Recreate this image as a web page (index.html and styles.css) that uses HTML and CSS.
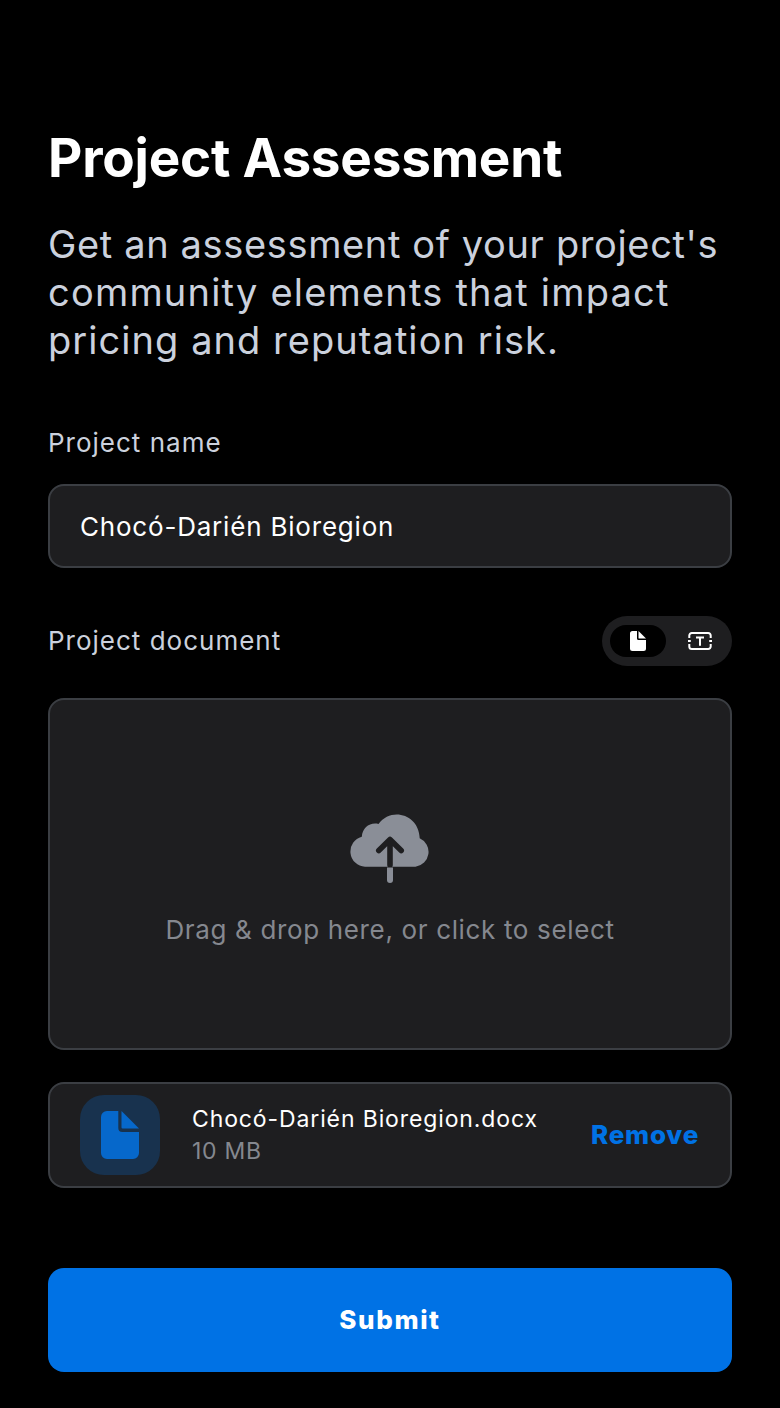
FILE: index.html
```html
<!DOCTYPE html>
<html lang="en">
<head>
<meta charset="utf-8">
<title>Project Assessment</title>
<link rel="stylesheet" href="styles.css">
</head>
<body>
<main class="page">
  <h1 class="title">Project Assessment</h1>
  <p class="intro"><span class="tight">Get an assessment of your project's</span><br><span class="loose">community elements that impact</span><br>pricing and reputation risk.</p>
  <label class="label" for="name">Project name</label>
  <input class="input" id="name" type="text" value="Chocó-Darién Bioregion">
  <div class="row">
    <span class="label doc">Project document</span>
    <div class="toggle">
      <button class="seg active" aria-label="File"><svg width="16" height="20" viewBox="0 0 16 20" fill="#fff"><path d="M2.500 0H7v7.500A1.500 1.500 0 0 0 8.500 9H16v8.500a2.500 2.500 0 0 1-2.500 2.500h-11A2.500 2.500 0 0 1 0 17.500v-15A2.500 2.500 0 0 1 2.500 0z"/><path d="M8.500 0L16 7.500H9a.5.5 0 0 1-.5-.5z"/></svg></button>
      <button class="seg" aria-label="Text"><svg width="24" height="18" viewBox="0 0 24 18" fill="none" stroke="#fff" stroke-width="2"><path d="M1.300 6V3.500A2.500 2.500 0 0 1 3.800 1h16.400a2.500 2.500 0 0 1 2.500 2.500V6M1.300 12v2.500A2.500 2.500 0 0 0 3.800 17h16.400a2.500 2.500 0 0 0 2.500-2.500V12M8 5.500h8M12 5.500V13.700"/><path d="M0 9h2.800M21.200 9H24"/></svg></button>
    </div>
  </div>
  <div class="drop">
    <svg width="80" height="70" viewBox="0 0 80 70"><path fill="#8a8e97" d="M15 52.700A15.200 15.200 0 0 1 11.800 22.800C12.500 13.500 20 8 28.500 10C41-7.500 69 0 69.700 24.300A14.900 14.900 0 0 1 65.500 52.700z"/><path d="M40 51V26M28.800 36.500L40 25.500l11.200 11" fill="none" stroke="#1e1e20" stroke-width="5.600" stroke-linecap="round" stroke-linejoin="round"/><path d="M37 53.500h6v12.500a3 3 0 0 1-6 0z" fill="#8a8e97"/></svg>
    <p class="hint">Drag &amp; drop here, or click to select</p>
  </div>
  <div class="file">
    <div class="thumb"><svg width="38" height="48" viewBox="0 0 38 48" fill="#0668cb"><path d="M6 0h11.300v17a4 4 0 0 0 4 4H38v21a6 6 0 0 1-6 6H6a6 6 0 0 1-6-6V6a6 6 0 0 1 6-6z"/><path d="M20.500 0L38 17.500H21.500a1 1 0 0 1-1-1z"/></svg></div>
    <div class="meta"><div class="fname">Chocó-Darién Bioregion.docx</div><div class="size">10 MB</div></div>
    <button class="remove">Remove</button>
  </div>
  <button class="submit">Submit</button>
</main>
</body>
</html>
```
FILE: styles.css
```css
* { box-sizing: border-box; margin: 0; padding: 0; }
body { background: #000; font-family: Inter, "Liberation Sans", sans-serif; color: #fff; }
button { border: 0; background: none; font: inherit; color: inherit; }
svg { display: block; }
.page { height: 1408px; padding: 126px 48px 0; display: flex; flex-direction: column; }
.title { font-size: 53px; line-height: 64px; font-weight: 700; letter-spacing: -.2px; white-space: nowrap; }
.intro { margin-top: 30px; font-size: 38px; line-height: 48px; letter-spacing: 1.05px; color: #cbd1dd; white-space: nowrap; }
.tight { letter-spacing: .64px; }
.loose { letter-spacing: 1.2px; }
.label { margin-top: 61px; font-size: 26px; line-height: 36px; letter-spacing: 1px; color: #cbd1dd; }
.input { margin-top: 23px; height: 84px; padding: 0 30px; border: 2px solid #3b3e43; border-radius: 16px; background: #1e1e20; color: #fff; font: 26px Inter, sans-serif; letter-spacing: .8px; outline: 0; }
.row { margin-top: 48px; height: 50px; display: flex; justify-content: space-between; align-items: center; }
.doc { margin: 0; }
.toggle { display: flex; gap: 6px; padding: 8px 4px 8px 8px; width: 130px; height: 50px; border-radius: 25px; background: #1e1e20; align-items: center; }
.seg { width: 56px; height: 32px; border-radius: 16px; display: flex; align-items: center; justify-content: center; }
.active { background: #000; }
.drop { margin-top: 32px; height: 352px; border: 2px solid #3b3e43; border-radius: 16px; background: #1e1e20; display: flex; flex-direction: column; align-items: center; padding-top: 114px; }
.hint { margin-top: 28px; font-size: 26px; line-height: 36px; letter-spacing: .65px; color: #85888f; white-space: nowrap; }
.file { margin-top: 32px; height: 106px; border: 2px solid #3b3e43; border-radius: 16px; background: #1e1e20; display: flex; align-items: center; padding: 0 31px 0 30px; }
.thumb { width: 80px; height: 80px; border-radius: 24px; background: #18324e; display: flex; align-items: center; justify-content: center; }
.meta { margin-left: 32px; flex: 1; font-size: 23px; line-height: 32px; letter-spacing: .88px; white-space: nowrap; }
.size { color: #85888f; letter-spacing: .7px; }
.remove { color: #0072e5; font-size: 26px; font-weight: 800; letter-spacing: .75px; padding-bottom: 2px; }
.submit { margin-top: 80px; height: 104px; border-radius: 16px; background: #0072e5; font-size: 26px; font-weight: 800; letter-spacing: 1.6px; padding-bottom: 2px; }
```
